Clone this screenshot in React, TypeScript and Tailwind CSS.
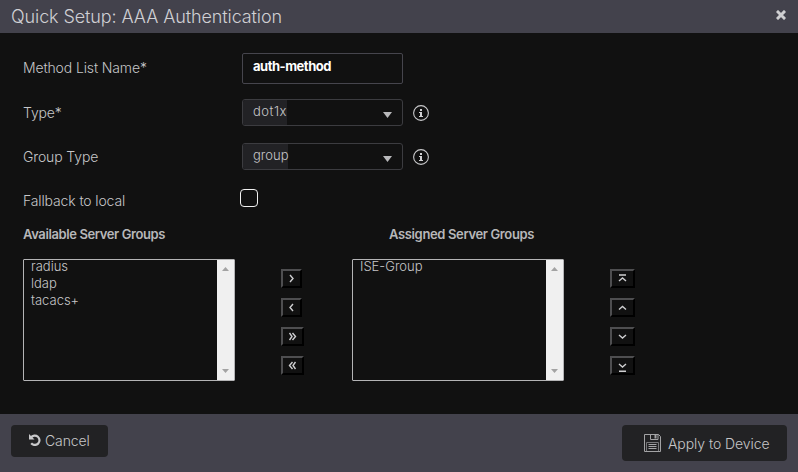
import type { ReactNode } from "react";

function Info() {
  return (
    <svg className="ml-2.5 h-4 w-4 shrink-0" viewBox="0 0 16 16" fill="none" aria-label="Information">
      <circle cx="8" cy="8" r="7.4" stroke="#c9c9cb" strokeWidth="1.1" />
      <path d="M7 4h2v2H7zM6 7h3v4h1v1H6v-1h1V8H6z" fill="#d2d2d4" />
    </svg>
  );
}

function Select({ value, shade }: { value: string; shade: string }) {
  return (
    <div className="flex h-[27px] w-[161px] items-center justify-between overflow-hidden rounded-[3px] border border-[#3c3c40]">
      <div className={`flex h-full items-center bg-[#222225] pb-px pl-[10px] text-[13px] whitespace-nowrap ${shade}`}>
        {value}
      </div>
      <svg className="mt-[5px] mr-[10px] h-[6px] w-[9px]" viewBox="0 0 9 6">
        <path d="M0 0h9L4.5 6z" fill="#b9b9bb" />
      </svg>
    </div>
  );
}

function Row({ label, height, children }: { label: ReactNode; height: string; children: ReactNode }) {
  return (
    <div className={`flex items-center ${height}`}>
      <div className="w-[219px] shrink-0 whitespace-nowrap">{label}</div>
      {children}
    </div>
  );
}

function ListBox({ items }: { items: string[] }) {
  return (
    <div className="flex h-[122px] w-[212px] justify-between rounded-[1px] border border-[#b4b4b6]">
      <ul className="-mt-[2px] pl-[7px] text-[13px] leading-[17px]">
        {items.map((item) => (
          <li key={item}>{item}</li>
        ))}
      </ul>
      <div className="flex w-[17px] flex-col items-center justify-between bg-[#f0f0f0] py-[7px]">
        <svg className="h-1 w-[7px]" viewBox="0 0 7 4"><path d="M0 4L3.5 0L7 4z" fill="#a3a3a3" /></svg>
        <svg className="h-1 w-[7px]" viewBox="0 0 7 4"><path d="M0 0L3.5 4L7 0z" fill="#a3a3a3" /></svg>
      </div>
    </div>
  );
}

function MoveButton({ width, path, label }: { width: string; path: string; label: string }) {
  return (
    <button
      aria-label={label}
      className={`flex h-[19px] items-center justify-center border-2 border-t-[#4e4e50] border-r-black border-b-black border-l-[#4e4e50] ${width}`}
    >
      <svg className="h-[13px] w-[13px] shrink-0" viewBox="0 0 13 13" fill="none" stroke="#cfcfd1" strokeWidth="1.4">
        <path d={path} />
      </svg>
    </button>
  );
}

export default function App() {
  return (
    <div className="flex h-[472px] w-[798px] flex-col overflow-hidden bg-[#111111] font-['Inter','Liberation_Sans',sans-serif] text-[14px] font-light text-[#c6c6c8]">
      <header className="flex h-[33px] shrink-0 items-center justify-between bg-[#43424c] pr-3 pl-[11px]">
        <h1 className="pb-px text-[18px] tracking-[-0.1px] text-[#d0d0d4]">Quick Setup: AAA Authentication</h1>
        <svg className="mb-[3px] h-[10px] w-[10px]" viewBox="0 0 10 10" aria-label="Close">
          <path d="M2 2l6 6M8 2l-6 6" stroke="#cfcfd1" strokeWidth="3" strokeLinecap="square" />
        </svg>
      </header>

      <main className="flex h-[381px] shrink-0 flex-col pl-[23px]">
        <div className="mt-5">
          <Row height="h-[31px]" label={<div className="pb-[3px] tracking-[-0.13px]">Method List Name*</div>}>
            <div className="flex h-[31px] w-[161px] items-center rounded-[2px] border border-[#46454d] pb-[3px] pl-[10px] text-[13px] font-bold tracking-[-0.48px] text-white">
              auth-method
            </div>
          </Row>
        </div>
        <div className="mt-[15px]">
          <Row height="h-[27px]" label={<div className="tracking-[-0.15px]">Type*</div>}>
            <Select value="dot1x" shade="w-11 tracking-[0.5px]" />
            <Info />
          </Row>
        </div>
        <div className="mt-[17px]">
          <Row height="h-[27px]" label={<div className="tracking-[-0.13px]">Group Type</div>}>
            <Select value="group" shade="w-[45px]" />
            <Info />
          </Row>
        </div>
        <div className="mt-[19px]">
          <Row height="h-[18px]" label={<div className="pt-1 tracking-[-0.13px]">Fallback to local</div>}>
            <div className="-ml-0.5 h-[18px] w-[18px] rounded-[4px] border-[1.5px] border-[#f1f1f1]" />
          </Row>
        </div>

        <div className="mt-[17px] flex h-[21px] items-center pt-px text-[13px] font-semibold tracking-[-0.39px] text-[#b7b7b9]">
          <h2 className="w-[366px]">Available Server Groups</h2>
          <h2 className="tracking-[-0.36px]">Assigned Server Groups</h2>
        </div>

        <div className="mt-[14px] flex">
          <ListBox items={["radius", "ldap", "tacacs+"]} />
          <div className="mt-[10px] ml-[46px] flex w-[71px] flex-col gap-[10px]">
            <MoveButton width="w-[21px]" label="Add" path="M5 3l3 3.5L5 10" />
            <MoveButton width="w-[21px]" label="Remove" path="M8 3L5 6.5L8 10" />
            <MoveButton width="w-[23px]" label="Add all" path="M3.5 3l2.5 3.5L3.5 10M6.5 3l3 3.5l-3 3.5" />
            <MoveButton width="w-[23px]" label="Remove all" path="M6.5 3l-3 3.5l3 3.5M9.5 3L7 6.5L9.5 10" />
          </div>
          <ListBox items={["ISE-Group"]} />
          <div className="mt-[10px] ml-[46px] flex flex-col gap-[10px]">
            <MoveButton width="w-[25px]" label="Move to top" path="M3 3h7M3 9l3.5-3l3.5 3" />
            <MoveButton width="w-[25px]" label="Move up" path="M3 8.5l3.5-3l3.5 3" />
            <MoveButton width="w-[25px]" label="Move down" path="M3 5l3.5 3L10 5" />
            <MoveButton width="w-[25px]" label="Move to bottom" path="M3 5l3.5 3l3.5-3M3 12.3h7" />
          </div>
        </div>
      </main>

      <footer className="flex h-[58px] shrink-0 items-start justify-between border-b-2 border-[#45424e] bg-[#43424c] pt-[11px] pr-[11px] pl-[11px]">
        <button className="flex h-8 w-[97px] items-center rounded-[4px] bg-[#222224] pb-[2px] pl-[18px]">
          <svg className="mr-[4px] h-3 w-3" viewBox="0 0 12 12" fill="none">
            <path d="M2 3.5A4.7 4.7 0 1 1 2.2 9.3" stroke="#c9c9cb" strokeWidth="2.2" />
            <path d="M0 0l5.5 5.5H0z" fill="#c9c9cb" />
          </svg>
          <span className="tracking-[-0.1px]">Cancel</span>
        </button>
        <button className="flex h-9 w-[165px] items-center rounded-[4px] bg-[#222224] pl-[22px]">
          <svg className="h-[18px] w-[17px]" viewBox="0 0 17 18" fill="none" stroke="#a3a3a5">
            <path d="M.5.5h14l2 2v15H.5zM6.5.5v5h7.500v-5" />
            <path d="M11.500 1v3.500" strokeWidth="2" />
            <path d="M2.500 17V8.500h12V17" stroke="#77777a" />
            <path d="M4.500 10.500h8M4.500 12.500h8M4.500 14.500h8" />
          </svg>
          <span className="ml-[7px] pt-px tracking-[-0.06px]">Apply to Device</span>
        </button>
      </footer>
    </div>
  );
}
